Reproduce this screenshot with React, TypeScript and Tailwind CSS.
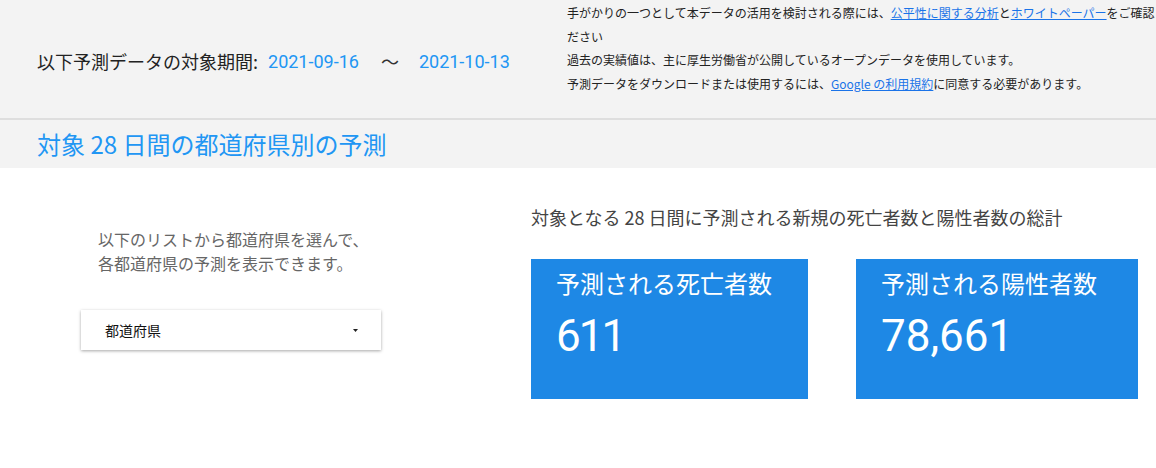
import React from "react";

const jp = { fontFamily: '"Noto Sans CJK JP", "Noto Sans", sans-serif' };
const rb = { fontFamily: 'Roboto, "Noto Sans CJK JP", sans-serif' };

export default function App() {
  return (
    <div className="w-[1156px] h-[468px] overflow-hidden bg-white" style={jp}>
      {/* top bar */}
      <div className="h-[118px] bg-[#f3f3f3] flex overflow-hidden">
        <div className="w-[530px] shrink-0 pl-[37px] pt-[4px] flex items-center text-[18px] text-[#222]">
          <span>以下予測データの対象期間:</span>
          <span className="ml-[10px] text-[#2196f3]" style={rb}>2021-09-16</span>
          <span className="ml-[22px] text-[#333]">〜</span>
          <span className="ml-[20px] text-[#2196f3]" style={rb}>2021-10-13</span>
        </div>
        <div className="pl-[37px] pt-[1px] text-[12px] leading-[23.5px] text-[#222]">
          <div className="whitespace-nowrap">
            手がかりの一つとして本データの活用を検討される際には、
            <span className="text-[#1a73e8] underline">公平性に関する分析</span>と
            <span className="text-[#1a73e8] underline">ホワイトペーパー</span>をご確認く
          </div>
          <div>ださい</div>
          <div className="whitespace-nowrap">過去の実績値は、主に厚生労働省が公開しているオープンデータを使用しています。</div>
          <div className="whitespace-nowrap">
            予測データをダウンロードまたは使用するには、
            <span className="text-[#1a73e8] underline">Google の利用規約</span>に同意する必要があります。
          </div>
        </div>
      </div>
      <div className="h-[2px] bg-[#dedede]" />
      {/* title band */}
      <div className="h-[48px] bg-[#f3f3f3] pl-[37px] flex items-center">
        <span className="text-[24px] text-[#2196f3]">対象 28 日間の都道府県別の予測</span>
      </div>
      {/* main */}
      <div className="flex">
        <div className="w-[531px] shrink-0 flex flex-col">
          <div className="pl-[98px] pt-[59px] text-[16px] leading-[24px] text-[#666]">
            <div>以下のリストから都道府県を選んで、</div>
            <div>各都道府県の予測を表示できます。</div>
          </div>
          <div className="ml-[81px] mt-[35px] w-[300px] h-[40px] bg-white shadow-[0_1px_3px_rgba(0,0,0,0.35)] flex items-center justify-between pl-[24px] pr-[23px]">
            <span className="text-[14px] text-[#111]">都道府県</span>
            <svg width="5" height="3" viewBox="0 0 5 3">
              <path d="M0 0 L5 0 L2.5 3 Z" fill="#222" />
            </svg>
          </div>
        </div>
        <div className="flex flex-col">
          <div className="pt-[36px] text-[18px] leading-[26px] text-[#444] whitespace-nowrap">
            対象となる 28 日間に予測される新規の死亡者数と陽性者数の総計
          </div>
          <div className="mt-[29px] flex gap-[48px]">
            <div className="w-[277px] h-[140px] bg-[#1e88e5] text-white pl-[25px] pt-[6px]">
              <div className="text-[24px] leading-[36px]">予測される死亡者数</div>
              <div className="text-[44px] leading-[56px] mt-[7px] tracking-[-2px]" style={rb}>611</div>
            </div>
            <div className="w-[282px] h-[140px] bg-[#1e88e5] text-white pl-[25px] pt-[6px]">
              <div className="text-[24px] leading-[36px]">予測される陽性者数</div>
              <div className="text-[44px] leading-[56px] mt-[7px]" style={rb}>78,661</div>
            </div>
          </div>
        </div>
      </div>
    </div>
  );
}
